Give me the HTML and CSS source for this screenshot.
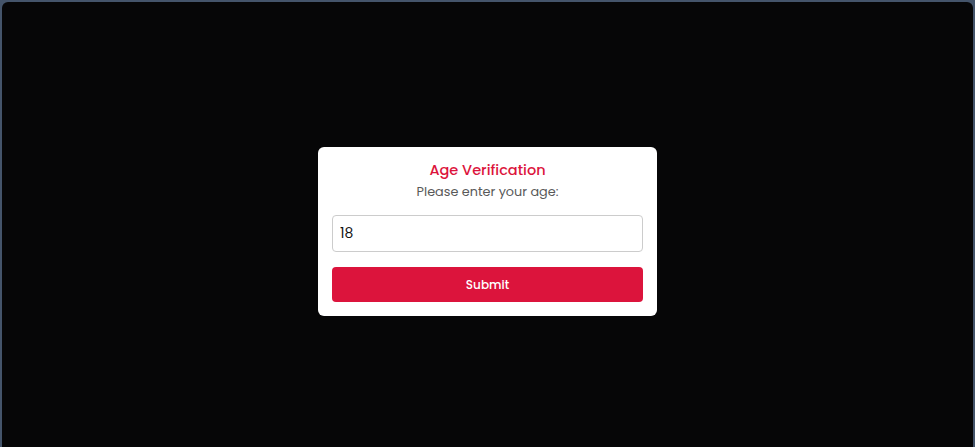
FILE: index.html
```html
<!DOCTYPE html>
<html lang="en">
<head>
<meta charset="utf-8">
<title>Age Verification</title>
<link rel="stylesheet" href="styles.css">
</head>
<body>
<main class="screen">
  <div class="modal">
    <h2 class="modal-title">Age Verification</h2>
    <p class="modal-text">Please enter your age:</p>
    <input class="age-input" type="text" value="18">
    <button class="submit-btn" type="button">Submit</button>
  </div>
</main>
</body>
</html>
```
FILE: styles.css
```css
html, body {
  margin: 0;
  height: 100%;
}
body {
  background: #44546a;
  font-family: "Poppins", "Open Sans", "Liberation Sans", sans-serif;
  padding: 2px 2px 0 2px;
  box-sizing: border-box;
}
.screen {
  height: 100%;
  background: #060607;
  border-radius: 6px 6px 0 0;
  display: flex;
  align-items: center;
  justify-content: center;
  padding-top: 14px;
  box-sizing: border-box;
}
.modal {
  width: 339px;
  box-sizing: border-box;
  background: #ffffff;
  border-radius: 6px;
  padding: 12px 14px 14px;
  display: flex;
  flex-direction: column;
  align-items: stretch;
  text-align: center;
}
.modal-title {
  margin: 0;
  font-size: 14.5px;
  line-height: 22px;
  font-weight: 500;
  color: #dc143c;
}
.modal-text {
  margin: 0;
  font-size: 12.8px;
  line-height: 22px;
  color: #595959;
}
.age-input {
  margin-top: 12px;
  height: 37px;
  box-sizing: border-box;
  border: 1px solid #cccccc;
  border-radius: 4px;
  padding: 0 7px;
  font-family: inherit;
  font-size: 14px;
  color: #111111;
  outline: none;
}
.submit-btn {
  margin-top: 15px;
  height: 35px;
  border: none;
  border-radius: 4px;
  background: #dc143c;
  color: #ffffff;
  font-family: inherit;
  font-size: 12px;
  font-weight: 500;
}
```
